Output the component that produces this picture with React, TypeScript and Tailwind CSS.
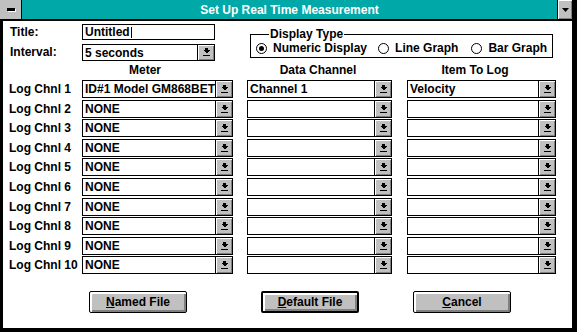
import React from "react";

const rows = [
  { label: "Log Chnl 1", meter: "ID#1 Model GM868BET", channel: "Channel 1", item: "Velocity" },
  { label: "Log Chnl 2", meter: "NONE", channel: "", item: "" },
  { label: "Log Chnl 3", meter: "NONE", channel: "", item: "" },
  { label: "Log Chnl 4", meter: "NONE", channel: "", item: "" },
  { label: "Log Chnl 5", meter: "NONE", channel: "", item: "" },
  { label: "Log Chnl 6", meter: "NONE", channel: "", item: "" },
  { label: "Log Chnl 7", meter: "NONE", channel: "", item: "" },
  { label: "Log Chnl 8", meter: "NONE", channel: "", item: "" },
  { label: "Log Chnl 9", meter: "NONE", channel: "", item: "" },
  { label: "Log Chnl 10", meter: "NONE", channel: "", item: "" },
];

function DropArrow() {
  return (
    <svg width="7" height="8" viewBox="0 0 7 8" shapeRendering="crispEdges">
      <rect x="2" y="0" width="3" height="2" fill="#000" />
      <polygon points="0,2 7,2 3.5,5.5" fill="#000" />
      <rect x="0" y="7" width="7" height="1" fill="#000" />
    </svg>
  );
}

function Combo({ value, className }: { value: string; className: string }) {
  return (
    <div className={`flex border border-black bg-white ${className}`}>
      <div className="flex-1 min-w-0 overflow-hidden whitespace-nowrap pl-[2px] leading-[16px]">{value}</div>
      <div className="w-[17px] border-l border-black bg-[#c0c0c0] flex items-center justify-center shadow-[inset_1px_1px_0_#fff,inset_-1px_-1px_0_#808080]">
        <DropArrow />
      </div>
    </div>
  );
}

function Radio({ checked, label }: { checked?: boolean; label: string }) {
  return (
    <div className="flex items-center gap-[6px] shrink-0 whitespace-nowrap">
      <div className="w-[11px] h-[11px] rounded-full border border-black flex items-center justify-center shrink-0">
        {checked && <div className="w-[5px] h-[5px] rounded-full bg-black" />}
      </div>
      <span>{label}</span>
    </div>
  );
}

function PushButton({ children, isDefault, className }: { children: React.ReactNode; isDefault?: boolean; className: string }) {
  return (
    <button
      className={`h-[22px] w-[98px] bg-[#c0c0c0] rounded-[2px] flex items-center justify-center shadow-[inset_1px_1px_0_#fff,inset_2px_2px_0_#fff,inset_-1px_-1px_0_#808080,inset_-2px_-2px_0_#808080] ${
        isDefault ? "border-2 border-black" : "border border-black"
      } ${className}`}
    >
      {children}
    </button>
  );
}

export default function App() {
  return (
    <div
      className="w-[577px] h-[332px] bg-black pr-[5px] pb-[4px] flex flex-col overflow-hidden text-[12px] font-bold text-black"
      style={{ fontFamily: '"Liberation Sans", Arial, sans-serif' }}
    >
      {/* title bar */}
      <div className="h-[21px] flex border-b-2 border-black shrink-0">
        <div className="w-[22px] bg-[#c0c0c0] border-r border-black flex items-center justify-center">
          <div className="w-[8px] h-[3px] bg-black shadow-[1px_1px_0_#fff]" />
        </div>
        <div className="flex-1 bg-[#00a8a8] text-white flex items-center justify-center leading-none">
          Set Up Real Time Measurement
        </div>
        <div className="w-[15px] bg-[#c0c0c0] border-l border-black flex items-center justify-center shadow-[inset_1px_1px_0_#fff,inset_-1px_-1px_0_#808080]">
          <svg width="7" height="4" viewBox="0 0 7 4">
            <polygon points="0,0 7,0 3.5,4" fill="#000" />
          </svg>
        </div>
      </div>

      {/* body */}
      <div className="flex-1 bg-white ml-[3px] pt-[2px] flex flex-col">
        <div className="flex items-start">
          <div className="flex flex-col gap-[2px]">
            <div className="flex items-center">
              <div className="w-[79px] pl-[7px]">Title:</div>
              <div className="w-[133px] h-[16px] border border-black flex items-center pl-[2px] leading-none">
                Untitled<span className="inline-block w-[1px] h-[11px] bg-black ml-[1px]" />
              </div>
            </div>
            <div className="flex items-center">
              <div className="w-[79px] pl-[7px]">Interval:</div>
              <Combo value="5 seconds" className="w-[133px] h-[17px] leading-[15px]" />
            </div>
          </div>

          <div className="relative ml-[35px] mt-[11px] w-[303px] h-[24px] border border-black flex items-center pl-[5px] pt-[4px] gap-[11px]">
            <span className="absolute left-[18px] top-[-8px] bg-white px-[1px] leading-[14px]">Display Type</span>
            <Radio checked label="Numeric Display" />
            <Radio label="Line Graph" />
            <div className="ml-[2px]">
              <Radio label="Bar Graph" />
            </div>
          </div>
        </div>

        {/* column headers */}
        <div className="flex h-[14px] mt-[2px] items-center">
          <div className="w-[79px]" />
          <div className="w-[151px] text-center pr-[25px]">Meter</div>
          <div className="w-[145px] ml-[14px] text-center pr-[3px]">Data Channel</div>
          <div className="w-[149px] ml-[15px] text-center pr-[13px]">Item To Log</div>
        </div>

        {/* channel rows */}
        <div className="flex flex-col gap-[1.6px] mt-[3px]">
          {rows.map((r) => (
            <div key={r.label} className="flex items-center h-[18px]">
              <div className="w-[79px] pl-[6px] whitespace-nowrap">{r.label}</div>
              <Combo value={r.meter} className="w-[151px] h-[18px]" />
              <Combo value={r.channel} className="w-[145px] h-[18px] ml-[14px]" />
              <Combo value={r.item} className="w-[149px] h-[18px] ml-[15px]" />
            </div>
          ))}
        </div>

        {/* buttons */}
        <div className="flex mt-[17px]">
          <PushButton className="ml-[86px]">
            <span>
              <span className="underline">N</span>amed File
            </span>
          </PushButton>
          <PushButton isDefault className="ml-[74px]">
            <span>
              <span className="underline">D</span>efault File
            </span>
          </PushButton>
          <PushButton className="ml-[54px]">
            <span>
              <span className="underline">C</span>ancel
            </span>
          </PushButton>
        </div>
      </div>
    </div>
  );
}
